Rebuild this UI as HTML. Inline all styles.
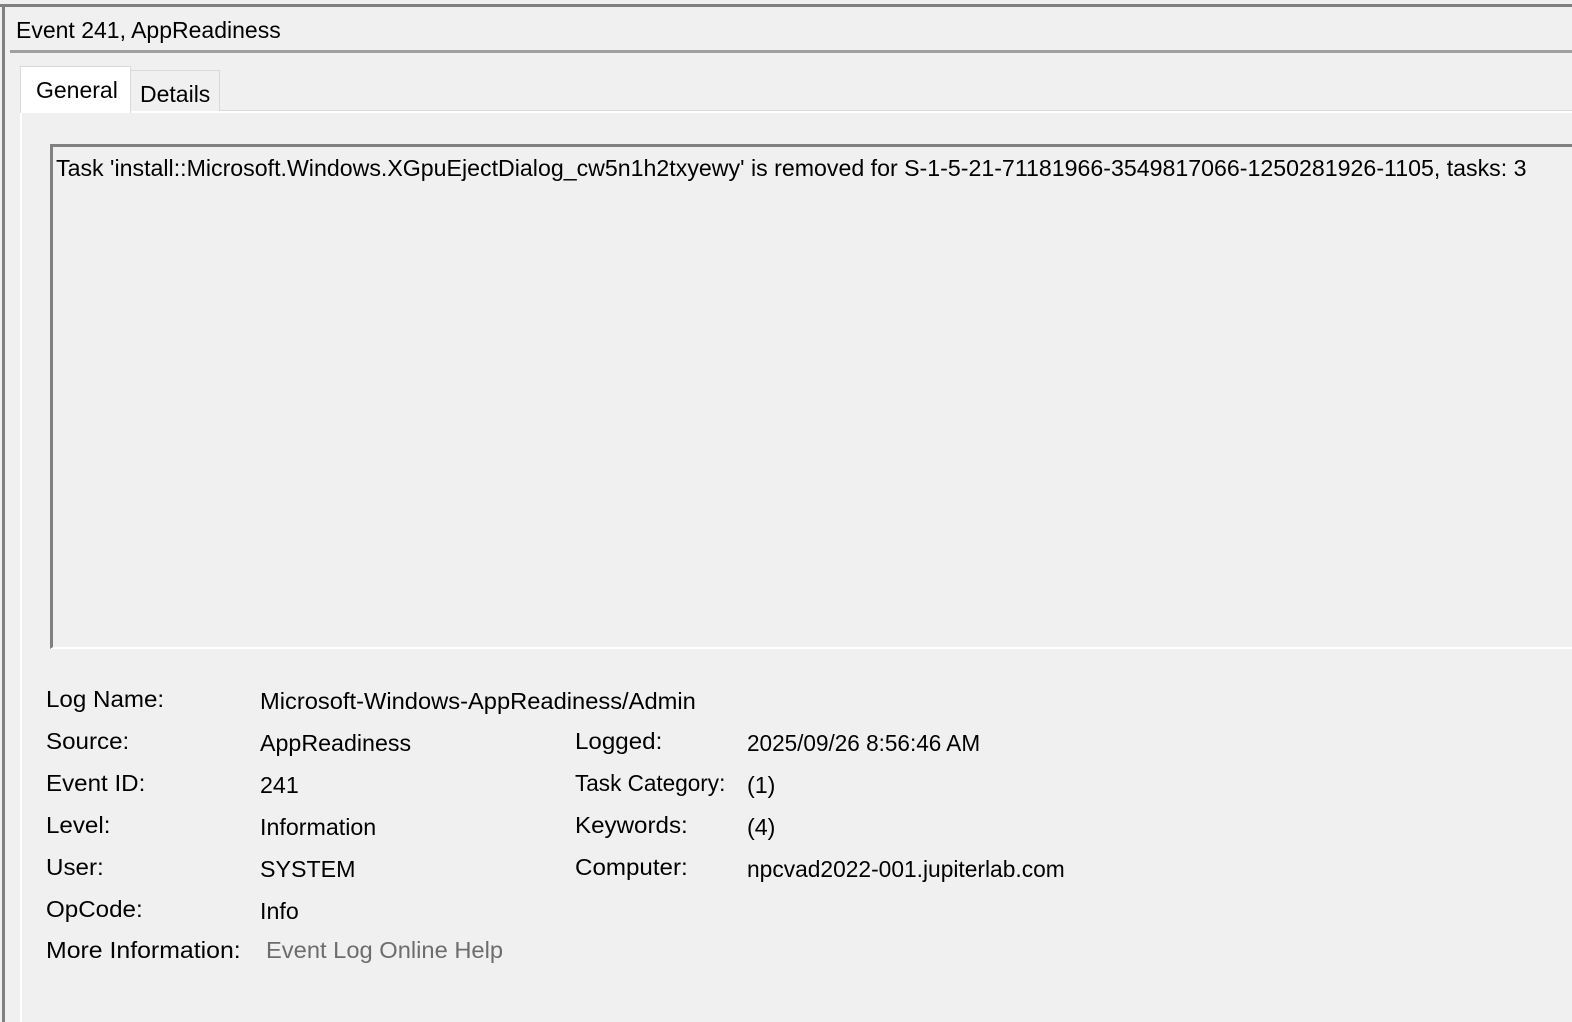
<!DOCTYPE html>
<html><head><meta charset="utf-8"><style>
body{margin:0;width:1572px;height:1022px;background:#f0f0f0;position:relative;overflow:hidden;font-family:"Liberation Sans",sans-serif;color:#000}
.a{position:absolute}
.t{position:absolute;font-size:23px;white-space:nowrap;line-height:26px;transform-origin:0 0}
.l{transform:scaleX(1.05)}
.v{transform:scaleX(1.01)}
</style></head><body>
<div class="a" style="left:0;top:4px;width:1572px;height:3px;background:#808080"></div>
<div class="a" style="left:2px;top:4px;width:3px;height:1018px;background:#808080"></div>
<div class="t" style="left:16px;top:17px">Event 241, AppReadiness</div>
<div class="a" style="left:10px;top:50px;width:1562px;height:3px;background:#a0a0a0"></div>
<div class="a" style="left:20px;top:110px;width:1552px;height:1px;background:#d9d9d9"></div>
<div class="a" style="left:20px;top:111px;width:1552px;height:2px;background:#fff"></div>
<div class="a" style="left:20px;top:111px;width:2px;height:911px;background:#fff"></div>
<div class="a" style="left:130px;top:70px;width:90px;height:41px;background:#f0f0f0;border:1px solid #d9d9d9;border-bottom:none;box-sizing:border-box"></div>
<div class="t" style="left:140px;top:81px">Details</div>
<div class="a" style="left:20px;top:66px;width:111px;height:47px;background:#fff;border:1px solid #d9d9d9;border-bottom:none;box-sizing:border-box"></div>
<div class="t" style="left:36px;top:77px">General</div>
<div class="a" style="left:50px;top:144px;width:1530px;height:505px;border-top:3px solid #808080;border-left:3px solid #808080;border-bottom:2px solid #fff;box-sizing:border-box"></div>
<div class="t" style="left:56px;top:155px;transform:scaleX(1.007)">Task 'install::Microsoft.Windows.XGpuEjectDialog_cw5n1h2txyewy' is removed for S-1-5-21-71181966-3549817066-1250281926-1105, tasks: 3</div>
<div class="t l" style="left:46px;top:686px">Log Name:</div>
<div class="t v" style="left:260px;top:688px;transform:scaleX(1.03)">Microsoft-Windows-AppReadiness/Admin</div>
<div class="t l" style="left:46px;top:728px">Source:</div>
<div class="t v" style="left:260px;top:730px">AppReadiness</div>
<div class="t l" style="left:575px;top:728px">Logged:</div>
<div class="t v" style="left:747px;top:730px;transform:scaleX(0.98)">2025/09/26 8:56:46 AM</div>
<div class="t l" style="left:46px;top:770px">Event ID:</div>
<div class="t v" style="left:260px;top:772px">241</div>
<div class="t" style="left:575px;top:770px;transform:scaleX(0.98)">Task Category:</div>
<div class="t v" style="left:747px;top:772px">(1)</div>
<div class="t l" style="left:46px;top:812px">Level:</div>
<div class="t v" style="left:260px;top:814px">Information</div>
<div class="t l" style="left:575px;top:812px">Keywords:</div>
<div class="t v" style="left:747px;top:814px">(4)</div>
<div class="t l" style="left:46px;top:854px">User:</div>
<div class="t v" style="left:260px;top:856px">SYSTEM</div>
<div class="t l" style="left:575px;top:854px">Computer:</div>
<div class="t v" style="left:747px;top:856px;transform:scaleX(0.99)">npcvad2022-001.jupiterlab.com</div>
<div class="t l" style="left:46px;top:896px">OpCode:</div>
<div class="t v" style="left:260px;top:898px">Info</div>
<div class="t" style="left:46px;top:937px;transform:scaleX(1.08)">More Information:</div>
<div class="t" style="left:266px;top:937px;color:#6d6d6d;transform:scaleX(1.03)">Event Log Online Help</div>
</body></html>
